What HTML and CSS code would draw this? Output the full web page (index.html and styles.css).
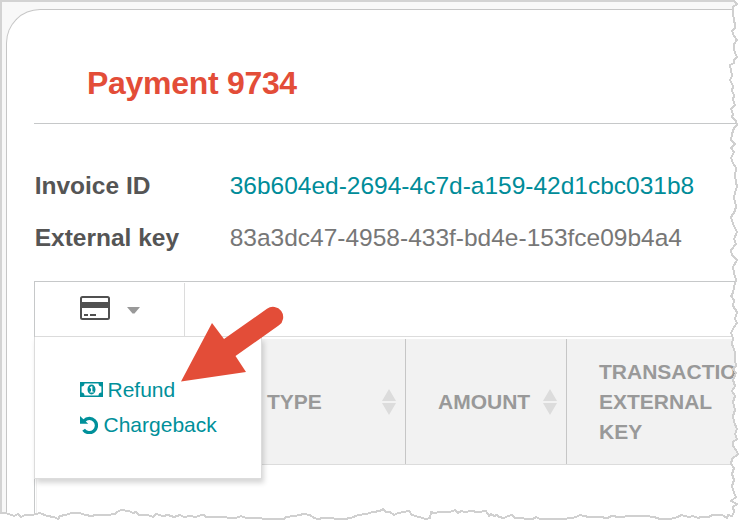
FILE: index.html
```
<!DOCTYPE html>
<html lang="en">
<head>
<meta charset="utf-8">
<title>Payment 9734</title>
<link rel="stylesheet" href="styles.css">
</head>
<body>
<main class="page">
  <section class="panel">
    <h1 class="title">Payment 9734</h1>
    <dl class="details">
      <dt>Invoice ID</dt>
      <dd><a class="link">36b604ed-2694-4c7d-a159-42d1cbc031b8</a></dd>
      <dt>External key</dt>
      <dd>83a3dc47-4958-433f-bd4e-153fce09b4a4</dd>
    </dl>
    <div class="box">
      <div class="toolbar">
        <div class="menu-button">
          <svg class="card" viewBox="0 0 30 24"><rect x="1" y="1" width="28" height="22" rx="1.5" fill="none" stroke="#505050" stroke-width="2"/><path d="M1 6h28v6H1zM4 18h4v2H4zM10 18h6v2h-6z" fill="#505050"/></svg>
          <svg class="caret" viewBox="0 0 13 7"><path d="M0 0h13L7.500 6.500h-2z" fill="#999"/></svg>
        </div>
        <div class="menu">
          <a class="item"><svg class="money" viewBox="0 0 23 15"><path fill-rule="evenodd" d="M0 0h23v15H0zM4.500 1.600A3 3 0 0 1 1.600 4.500v6a3 3 0 0 1 2.900 2.900h14a3 3 0 0 1 2.900-2.900v-6a3 3 0 0 1-2.900-2.900z" fill="#00909a"/><ellipse cx="11.500" cy="7.500" rx="4" ry="5" fill="#00909a"/><path d="M9.700 5.600l1.600-1.400h1.100v5.200h1.200v1.200H9.800V9.400H11V6.100l-.8.6z" fill="#fff"/></svg>Refund</a>
          <a class="item"><svg class="undo" viewBox="0 0 18 18"><path d="M4.100 4.800A7.100 7.100 0 1 1 3.600 13.700" fill="none" stroke="#00909a" stroke-width="3.300"/><path d="M0 0l8.200 7.800H0z" fill="#00909a"/></svg>Chargeback</a>
        </div>
      </div>
      <div class="thead">
        <div class="th type">TYPE<svg class="sort" viewBox="0 0 14 26"><path d="M7 0l7 12H0zM0 14h14L7 26z"/></svg></div>
        <div class="th amount">AMOUNT<svg class="sort" viewBox="0 0 14 26"><path d="M7 0l7 12H0zM0 14h14L7 26z"/></svg></div>
        <div class="th key">TRANSACTION<br>EXTERNAL<br>KEY</div>
      </div>
      <div class="tbody"></div>
    </div>
  </section>
</main>
<svg class="arrow" viewBox="0 0 110 80"><path d="M3.500 78.500L34.500 20L46.500 36L89.500 5.800A10.200 10.200 0 0 1 101.500 22.300L58 53L68.500 69z" transform="translate(-2.500 -2)" fill="#e34d38"/></svg>
<svg class="tear" viewBox="0 0 739 520">
  <path fill="#fff" stroke="#d0d0d0" stroke-width="2" shape-rendering="crispEdges" d="M733-3L735 2L737 4L733 7L733 13L734 20L735 25L735 28L732 31L734 36L737 40L734 44L734 49L735 53L737 57L734 60L734 63L730 65L731 70L732 76L730 80L733 86L732 91L734 95L733 100L735 105L731 109L733 114L732 117L736 121L737 125L734 128L732 134L731 140L735 144L731 148L734 152L731 158L733 163L736 168L735 176L736 182L737 187L735 192L734 198L736 206L735 211L731 217L733 224L737 232L734 239L736 244L731 250L732 255L737 260L733 267L734 273L736 280L734 287L733 293L731 296L734 300L733 306L737 312L735 319L737 323L734 327L731 333L733 338L732 344L735 352L735 359L736 366L733 369L736 373L733 380L735 386L732 391L735 396L733 402L735 410L733 416L734 422L737 429L735 434L737 439L733 442L733 446L736 450L738 454L732 459L731 464L734 468L732 474L734 480L732 486L734 493L736 497L731 501L737 504L733 507L734 512L732 516L728 515L727 518L722 515L712 515L709 517L701 517L698 518L693 516L689 517L685 516L681 515L678 517L670 519L660 519L654 517L646 516L630 516L620 517L611 516L608 518L599 517L589 517L584 516L580 515L578 516L573 518L562 519L540 519L536 517L533 519L515 518L512 515L508 516L504 518L499 517L497 515L494 516L491 514L489 516L486 511L478 512L471 511L465 512L461 511L458 513L455 510L450 512L440 512L434 513L431 512L430 518L426 519L419 517L412 515L409 511L398 513L394 515L390 512L386 512L383 509L380 511L373 512L366 514L358 515L351 518L344 519L323 518L318 519L314 518L310 515L304 514L299 515L295 516L286 517L284 519L268 519L256 518L246 518L241 516L236 518L230 518L224 517L216 517L206 517L204 515L201 515L196 517L190 516L184 517L180 515L174 517L168 515L163 516L156 514L153 517L148 515L139 515L136 512L133 513L129 511L121 510L117 512L115 514L107 515L96 515L91 516L86 515L79 513L72 513L65 515L60 516L58 519L54 517L47 516L40 513L36 514L32 515L25 515L21 517L18 514L14 516L9 514L5 513L-2 513V525H745V-5Z"/>
</svg>
</body>
</html>
```
FILE: styles.css
```
* { box-sizing: border-box; }
body {
  margin: 0;
  width: 739px;
  height: 520px;
  overflow: hidden;
  position: relative;
  background: #fff;
  font-family: "Liberation Sans", Arial, sans-serif;
}
.page {
  height: 520px;
  padding: 7px 0 0 4px;
  border-top: 2px solid #d3d3d3;
  border-left: 2px solid #d3d3d3;
  background: #f8f8f8;
}
.panel {
  height: 530px;
  padding-left: 27px;
  border: 1px solid #c6c6c6;
  border-width: 1px 0 0 1px;
  border-radius: 34px 0 0 0;
  background: #fff;
}
.title {
  margin: 0;
  height: 114px;
  padding: 53px 0 0 53px;
  border-bottom: 1px solid #c6c8c9;
  color: #e34d38;
  font-size: 32px;
  letter-spacing: -.3px;
  line-height: 40px;
}
.details {
  display: grid;
  grid-template-columns: 195px 1fr;
  grid-auto-rows: 52px;
  margin: 36px 0 0;
  padding-left: .7px;
  height: 121px;
  color: #777;
  font-size: 24.5px;
  line-height: 52px;
}
.details dt { color: #555; font-weight: bold; }
.details dd { margin: 0; }
.link { color: #008c99; }
.box {
  border: 1px solid #c6c8c9;
  border-width: 1px 0 0 1px;
}
.toolbar {
  position: relative;
  height: 55px;
  padding-top: 1px;
  border-bottom: 1px solid #dcdcdc;
}
.menu-button {
  display: flex;
  width: 150px;
  height: 53px;
  padding: 13px 0 0 45px;
  border-right: 1px solid #dcdcdc;
}
.card { width: 30px; height: 24px; }
.caret { width: 13px; height: 7px; margin: 11px 0 0 17px; }
.menu {
  position: absolute;
  z-index: 1;
  top: 55px;
  left: -1px;
  width: 228px;
  height: 142px;
  padding: 35px 0 0 44.5px;
  border: 1px solid #dcdcdc;
  border-top: 0;
  background: #fff;
  box-shadow: 2px 4px 5px rgba(0, 0, 0, .16);
}
.item {
  display: flex;
  align-items: center;
  height: 35px;
  color: #00909a;
  font-size: 21px;
}
.money { width: 23px; height: 15px; margin-right: 5px; }
.undo { width: 18px; height: 18px; margin-right: 6px; }
.thead {
  display: flex;
  height: 128px;
  padding-top: 2px;
  border-bottom: 1px solid #dcdcdc;
  color: #999;
  font-size: 21px;
  font-weight: bold;
  line-height: 30px;
}
.th {
  display: flex;
  flex: none;
  align-items: center;
  justify-content: space-between;
  background: #f2f2f2;
  border-right: 1px solid #c6c6c6;
}
.type { width: 371px; padding: 0 9px 0 232px; }
.amount { width: 161px; padding: 0 9px 0 32px; }
.key { display: block; width: 180px; padding: 18px 0 0 32px; border-right: 0; }
.sort { width: 14px; height: 26px; fill: #dcdcdc; }
.tbody { height: 60px; margin-left: 1px; border-left: 1px solid #f0f0f0; }
.arrow {
  position: absolute;
  z-index: 2;
  top: 305px;
  left: 180px;
  width: 110px;
  height: 80px;
}
.tear {
  position: absolute;
  z-index: 3;
  top: 0;
  left: 0;
  width: 739px;
  height: 520px;
}
```
